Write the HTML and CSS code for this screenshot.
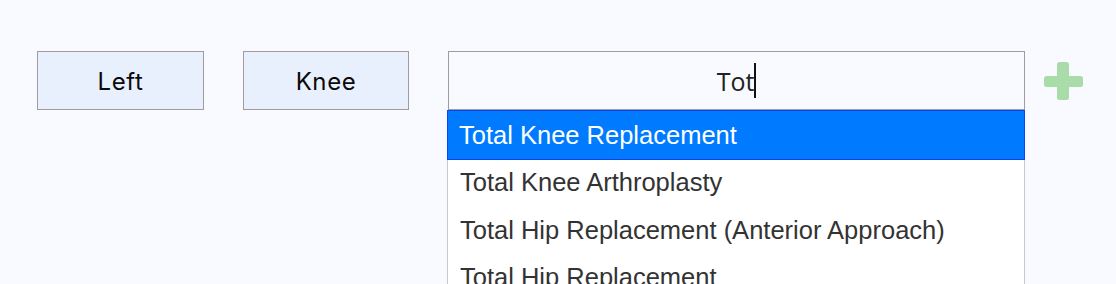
FILE: index.html
```html
<!DOCTYPE html>
<html>
<head>
<meta charset="utf-8">
<link rel="stylesheet" href="styles.css">
</head>
<body>
<div class="row">
  <div class="chip">Left</div>
  <div class="chip">Knee</div>
  <div class="combo">
    <div class="field"><span class="value">Tot</span><span class="caret"></span></div>
    <ul class="menu">
      <li class="item active">Total Knee Replacement</li>
      <li class="item">Total Knee Arthroplasty</li>
      <li class="item">Total Hip Replacement (Anterior Approach)</li>
      <li class="item">Total Hip Replacement</li>
    </ul>
  </div>
  <div class="add">
    <svg width="39" height="38" viewBox="0 0 39 38"><rect x="13" y="0" width="12" height="38" rx="2.5" fill="#aadcaa"/><rect x="0" y="14" width="39" height="11" rx="2.5" fill="#aadcaa"/></svg>
  </div>
</div>
</body>
</html>
```
FILE: styles.css
```css
html, body { margin: 0; padding: 0; }
body { background: #f8faff; width: 1116px; height: 284px; overflow: hidden; }
.row { display: flex; align-items: center; padding: 51px 0 0 37px; }
.chip {
  width: 165px; box-sizing: content-box;
  border: 1px solid #a39a9c; background: #e8f0fe;
  display: flex; align-items: center; justify-content: center;
  font-family: Inter, "Liberation Sans", sans-serif; font-size: 24px; font-weight: 400; letter-spacing: 0.6px; color: #0a0a0a;
  margin-right: 39px; padding-top: 1px; height: 56px;
}
.chip + .chip { width: 164px; }
.combo { position: relative; width: 577px; height: 59px; }
.field {
  box-sizing: border-box; height: 59px; width: 577px;
  border: 1px solid #a39a9c; background: #f8faff;
  display: flex; align-items: center; justify-content: center;
  font-family: "Open Sans", sans-serif; font-size: 25px; color: #222;
}
.caret { display: inline-block; width: 2px; height: 35px; background: #111; }
.menu {
  position: absolute; left: -1px; top: 59px; width: 578px; margin: 0; padding: 0;
  list-style: none; background: #fff; border-left: 1px solid #c8c8c8; border-right: 1px solid #c8c8c8;
  box-sizing: border-box;
  font-family: "Liberation Sans", Arial, sans-serif; font-size: 25.5px; color: #333;
}
.item { height: 47.5px; line-height: 47.5px; padding-left: 12px; white-space: nowrap; }
.item.active { box-sizing: border-box; background: #007bff; color: #fff; border: 1px solid #0a45f0; height: 50px; line-height: 48px; padding-left: 11px; margin: 0 -1px -1px; }
.add { margin-left: 19px; display: flex; }
```
